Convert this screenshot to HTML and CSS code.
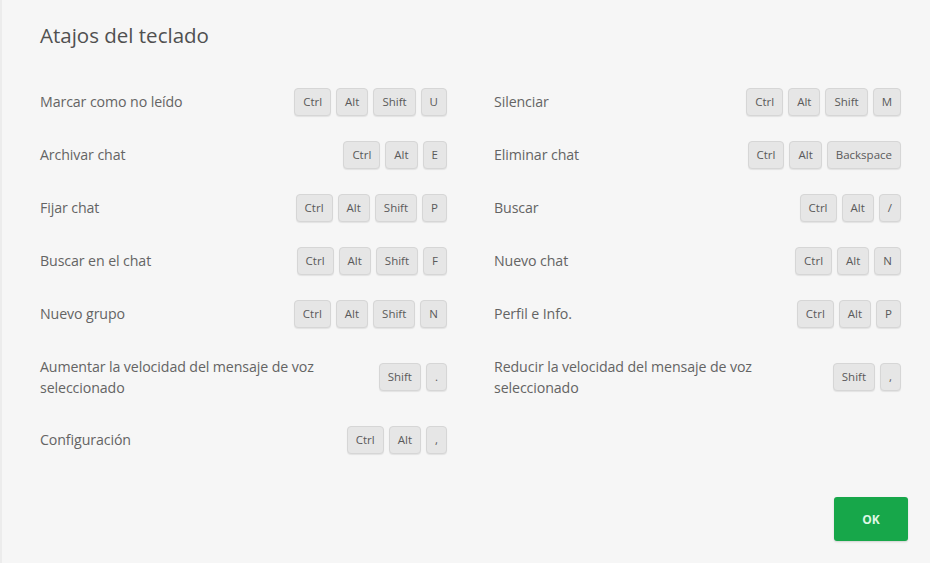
FILE: index.html
```html
<!DOCTYPE html>
<html lang="es">
<head>
<meta charset="utf-8">
<title>Atajos del teclado</title>
<link rel="stylesheet" href="styles.css">
</head>
<body>
<div class="dialog">
  <h1 class="title">Atajos del teclado</h1>
  <div class="grid">
    <div class="row"><span class="label">Marcar como no leído</span><span class="keys"><kbd>Ctrl</kbd><kbd>Alt</kbd><kbd>Shift</kbd><kbd>U</kbd></span></div>
    <div class="row"><span class="label">Silenciar</span><span class="keys"><kbd>Ctrl</kbd><kbd>Alt</kbd><kbd>Shift</kbd><kbd>M</kbd></span></div>

    <div class="row"><span class="label">Archivar chat</span><span class="keys"><kbd>Ctrl</kbd><kbd>Alt</kbd><kbd>E</kbd></span></div>
    <div class="row"><span class="label">Eliminar chat</span><span class="keys"><kbd>Ctrl</kbd><kbd>Alt</kbd><kbd>Backspace</kbd></span></div>

    <div class="row"><span class="label">Fijar chat</span><span class="keys"><kbd>Ctrl</kbd><kbd>Alt</kbd><kbd>Shift</kbd><kbd>P</kbd></span></div>
    <div class="row"><span class="label">Buscar</span><span class="keys"><kbd>Ctrl</kbd><kbd>Alt</kbd><kbd>/</kbd></span></div>

    <div class="row"><span class="label">Buscar en el chat</span><span class="keys"><kbd>Ctrl</kbd><kbd>Alt</kbd><kbd>Shift</kbd><kbd>F</kbd></span></div>
    <div class="row"><span class="label">Nuevo chat</span><span class="keys"><kbd>Ctrl</kbd><kbd>Alt</kbd><kbd>N</kbd></span></div>

    <div class="row"><span class="label">Nuevo grupo</span><span class="keys"><kbd>Ctrl</kbd><kbd>Alt</kbd><kbd>Shift</kbd><kbd>N</kbd></span></div>
    <div class="row"><span class="label">Perfil e Info.</span><span class="keys"><kbd>Ctrl</kbd><kbd>Alt</kbd><kbd>P</kbd></span></div>

    <div class="row tall"><span class="label">Aumentar la velocidad del mensaje de voz seleccionado</span><span class="keys"><kbd>Shift</kbd><kbd>.</kbd></span></div>
    <div class="row tall"><span class="label">Reducir la velocidad del mensaje de voz seleccionado</span><span class="keys"><kbd>Shift</kbd><kbd>,</kbd></span></div>

    <div class="row"><span class="label">Configuración</span><span class="keys"><kbd>Ctrl</kbd><kbd>Alt</kbd><kbd>,</kbd></span></div>
  </div>
  <div class="footer"><button class="ok">OK</button></div>
</div>
</body>
</html>
```

FILE: styles.css
```css
html, body {
  margin: 0;
  padding: 0;
  background: #f6f6f6;
  font-family: "Open Sans", "Noto Sans", sans-serif;
  color: #555;
}

.dialog {
  padding: 21px 29px 22px 38px;
  box-sizing: border-box;
  height: 563px;
  display: flex;
  flex-direction: column;
  border-left: 2px solid #ececec;
}

.title {
  margin: 0;
  font-size: 20.5px;
  line-height: 28px;
  font-weight: 400;
  color: #505050;
}

.grid {
  margin-top: 26px;
  display: grid;
  grid-template-columns: 1fr 1fr;
  column-gap: 47px;
}

.row {
  height: 53px;
  display: flex;
  align-items: center;
  justify-content: space-between;
  gap: 24px;
}

.row.tall {
  height: 73px;
}

.label {
  font-size: 14.2px;
  line-height: 21px;
  color: #646464;
  letter-spacing: -0.1px;
}

.keys {
  display: flex;
  gap: 5px;
  flex-shrink: 0;
}

kbd {
  font-family: "Open Sans", "Noto Sans", sans-serif;
  font-size: 11.5px;
  color: #5a5a5a;
  height: 28px;
  min-width: 20px;
  box-sizing: border-box;
  padding: 0 8px;
  display: inline-flex;
  align-items: center;
  justify-content: center;
  background: #e6e6e6;
  border: 1px solid #d6d6d6;
  border-radius: 4px;
  box-shadow: 0 1px 1px rgba(0, 0, 0, 0.08);
}

.footer {
  margin-top: auto;
  display: flex;
  justify-content: flex-end;
  margin-right: -7px;
}

.ok {
  width: 74px;
  height: 44px;
  border: none;
  border-radius: 3px;
  background: #17a74a;
  color: #dff7e5;
  font-family: "Open Sans", "Noto Sans", sans-serif;
  font-size: 12px;
  font-weight: 700;
  box-shadow: 0 1px 2px rgba(0, 0, 0, 0.15);
}
```
